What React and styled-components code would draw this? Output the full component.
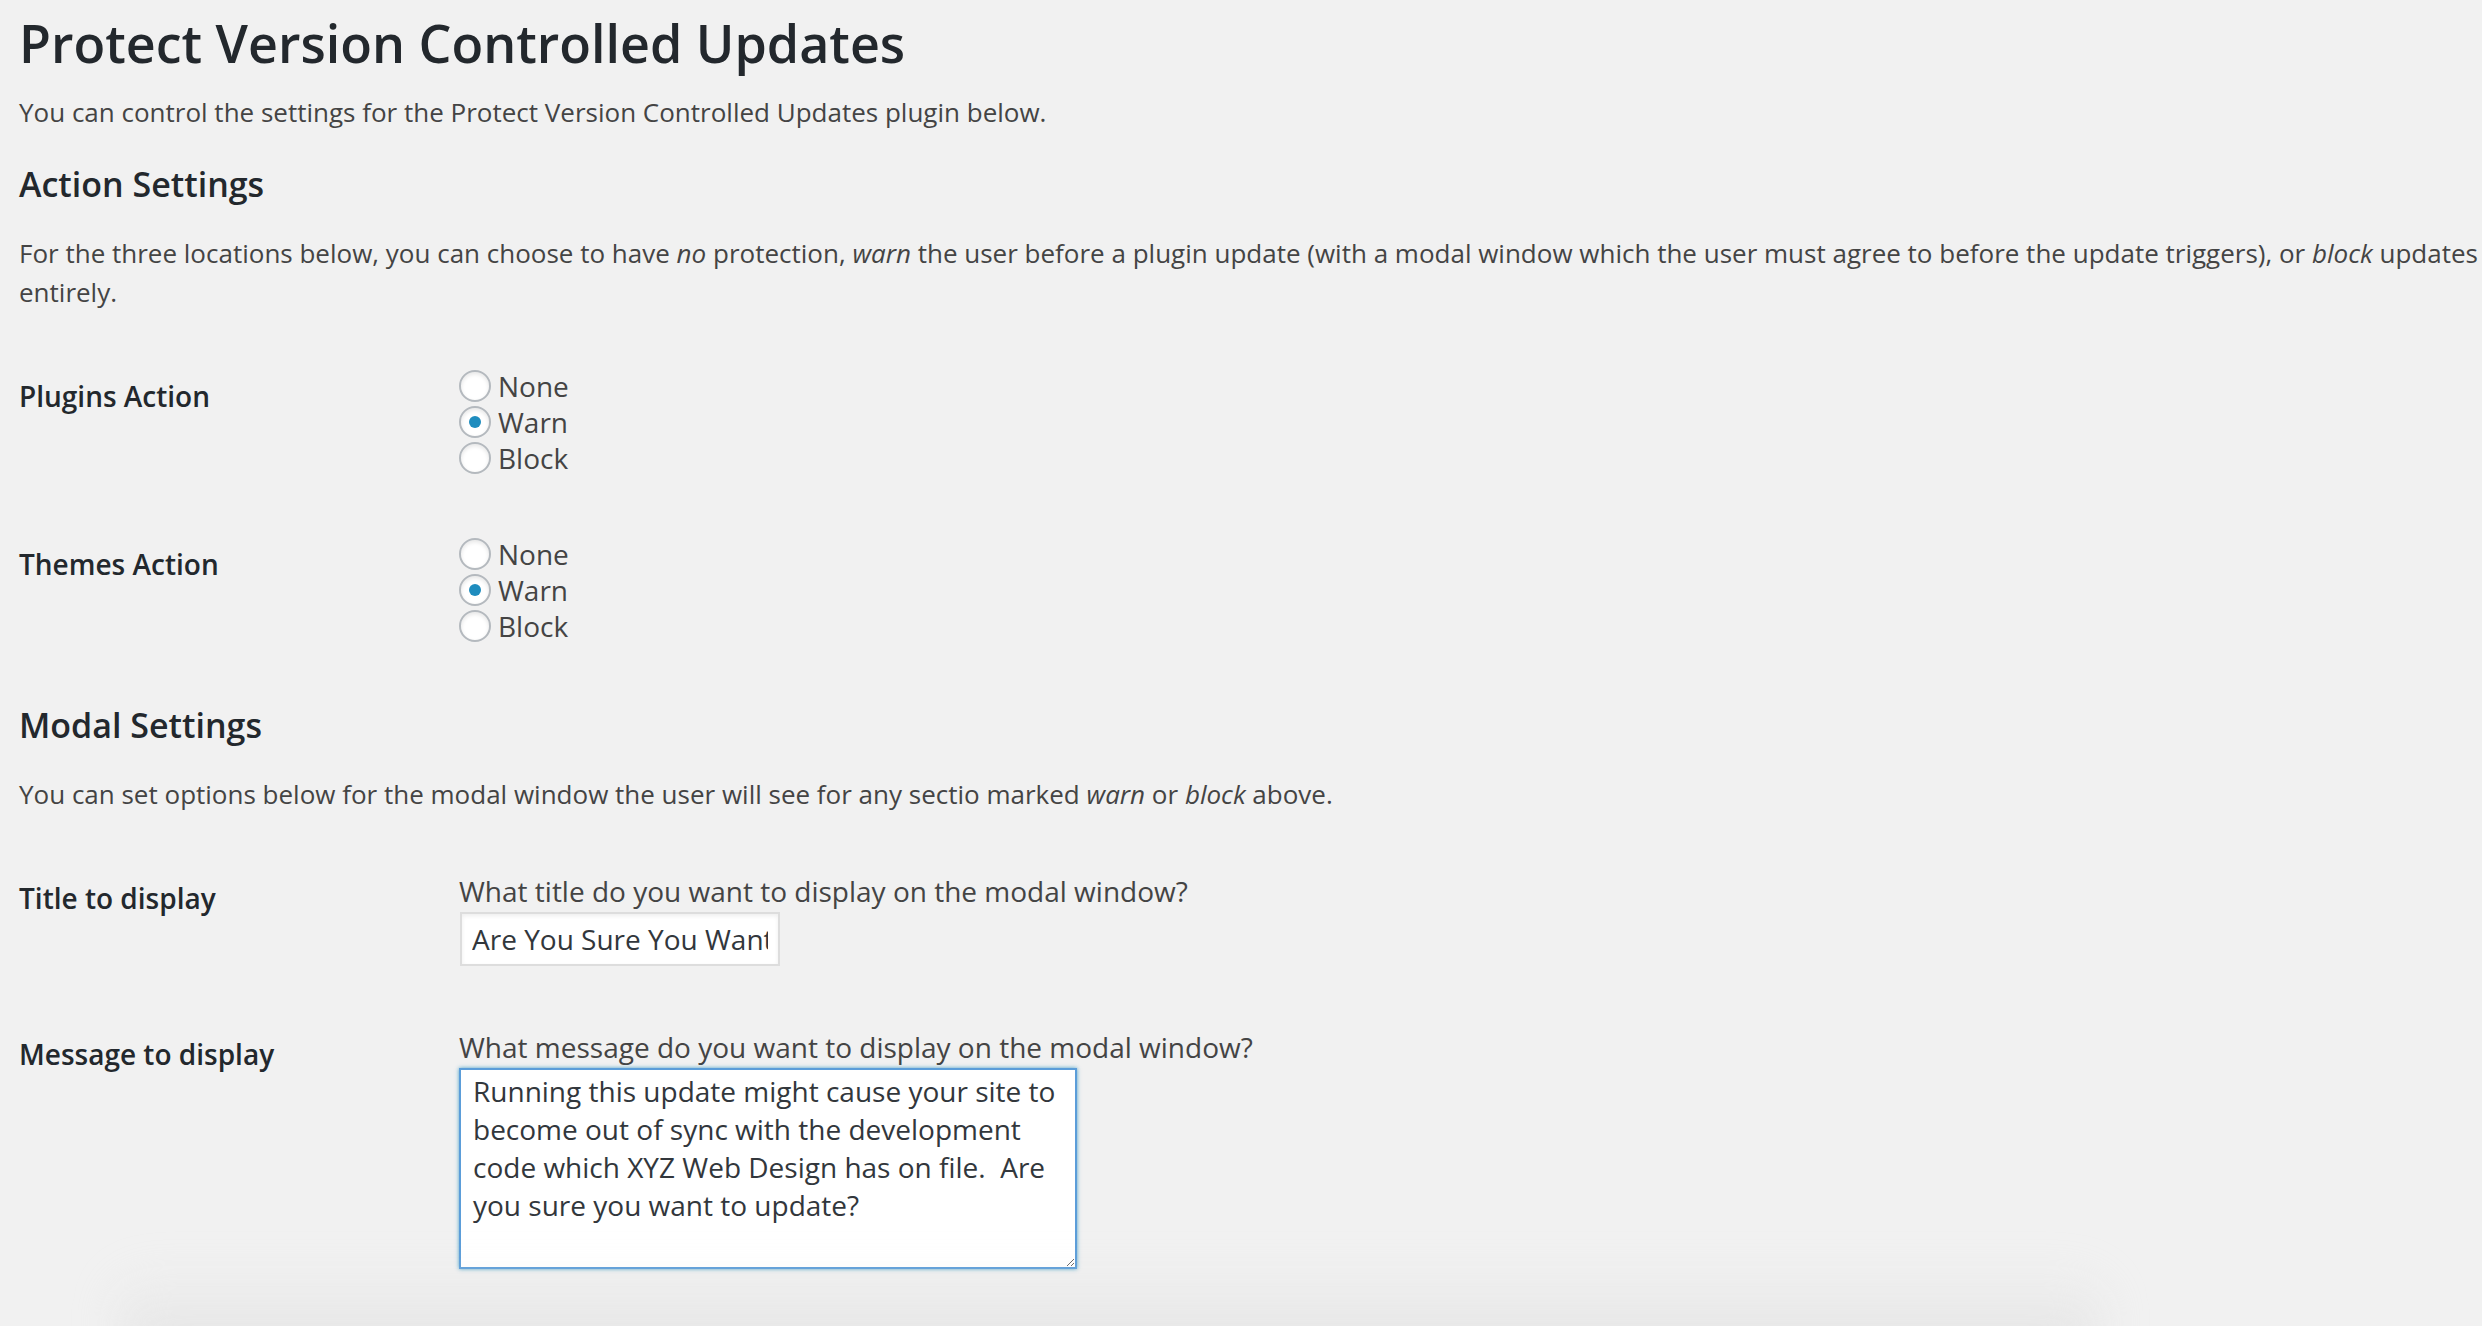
import React from "react";
import styled, { createGlobalStyle } from "styled-components";

const Global = createGlobalStyle`
  html, body { margin: 0; padding: 0; background: #f1f1f1; }
  body {
    font-family: "Open Sans", "Noto Sans", "Liberation Sans", sans-serif;
    color: #444;
    overflow: hidden;
  }
  * { box-sizing: border-box; }
`;

const Page = styled.div`
  padding: 9px 0 0 19px;
`;

const Title = styled.h1`
  margin: 0;
  font-size: 52px;
  line-height: 68px;
  font-weight: 600;
  color: #23282d;
`;

const Text = styled.p`
  margin: ${(p) => p.$mt}px 0 0;
  font-size: 26px;
  line-height: 39px;
  color: #444;
  em { font-style: italic; }
`;

const SectionHeading = styled.h2`
  margin: ${(p) => p.$mt}px 0 0;
  font-size: 34px;
  line-height: 44px;
  font-weight: 600;
  color: #23282d;
`;

const FormTable = styled.div`
  margin-top: 26px;
  display: flex;
  flex-direction: column;
`;

const Row = styled.div`
  display: flex;
  align-items: flex-start;
`;

const RowLabel = styled.div`
  flex: none;
  width: 440px;
  padding-top: 40px;
  font-size: 28px;
  line-height: 36.4px;
  font-weight: 600;
  color: #23282d;
`;

const Field = styled.div`
  padding: 30px 0;
  display: flex;
  flex-direction: column;
`;

const Option = styled.label`
  display: flex;
  align-items: center;
  gap: 7px;
  height: 36px;
  font-size: 28px;
  line-height: 36px;
  color: #444;
`;

const Radio = styled.input.attrs({ type: "radio" })`
  appearance: none;
  -webkit-appearance: none;
  margin: 0;
  flex: none;
  width: 32px;
  height: 32px;
  border: 2px solid #b4b9be;
  border-radius: 50%;
  background: #fff;
  box-shadow: inset 0 2px 4px rgba(0, 0, 0, 0.1);
  display: flex;
  align-items: center;
  justify-content: center;
  &:checked::before {
    content: "";
    width: 12px;
    height: 12px;
    border-radius: 50%;
    background: #1e8cbe;
  }
`;

const Description = styled.div`
  font-size: 28px;
  line-height: 42px;
  color: #444;
`;

const TextInput = styled.input`
  width: 320px;
  height: 54px;
  margin: 0 0 0 1px;
  padding: 0 10px;
  border: 2px solid #ddd;
  box-shadow: inset 0 2px 4px rgba(0, 0, 0, 0.07);
  background: #fff;
  color: #32373c;
  font-family: "Open Sans", "Noto Sans", sans-serif;
  font-size: 28px;
  outline: none;
`;

const TextArea = styled.textarea`
  display: block;
  width: 618px;
  height: 201px;
  margin: 0;
  padding: 2px 12px;
  border: 2px solid #5b9dd9;
  box-shadow: 0 0 4px rgba(30, 140, 190, 0.8);
  background: #fff;
  color: #32373c;
  font-family: "Open Sans", "Noto Sans", sans-serif;
  font-size: 28px;
  line-height: 38px;
  outline: none;
  resize: both;
`;

const BottomShade = styled.div`
  margin: -30px 380px 0 100px;
  height: 90px;
  background: linear-gradient(to bottom, rgba(225, 225, 225, 0), rgba(225, 225, 225, 0.9));
  filter: blur(22px);
  border-radius: 40px;
`;

const RadioGroup = ({ name, options, checked }) => (
  <Field>
    {options.map((o) => (
      <Option key={o}>
        <Radio name={name} defaultChecked={o === checked} />
        {o}
      </Option>
    ))}
  </Field>
);

const opts = ["None", "Warn", "Block"];

export default function App() {
  return (
    <>
      <Global />
      <Page>
        <Title>Protect Version Controlled Updates</Title>
        <Text $mt={16}>
          You can control the settings for the Protect Version Controlled Updates plugin below.
        </Text>
        <SectionHeading $mt={30}>Action Settings</SectionHeading>
        <Text $mt={28}>
          For the three locations below, you can choose to have <em>no</em> protection,{" "}
          <em>warn</em> the user before a plugin update (with a modal window which the user must
          agree to before the update triggers), or <em>block</em> updates entirely.
        </Text>
        <FormTable>
          <Row>
            <RowLabel>Plugins Action</RowLabel>
            <RadioGroup name="plugins" options={opts} checked="Warn" />
          </Row>
          <Row>
            <RowLabel>Themes Action</RowLabel>
            <RadioGroup name="themes" options={opts} checked="Warn" />
          </Row>
        </FormTable>
        <SectionHeading $mt={29}>Modal Settings</SectionHeading>
        <Text $mt={28}>
          You can set options below for the modal window the user will see for any sectio marked{" "}
          <em>warn</em> or <em>block</em> above.
        </Text>
        <FormTable>
          <Row>
            <RowLabel>Title to display</RowLabel>
            <Field>
              <Description>What title do you want to display on the modal window?</Description>
              <TextInput defaultValue="Are You Sure You Want To Update?" />
            </Field>
          </Row>
          <Row>
            <RowLabel>Message to display</RowLabel>
            <Field>
              <Description>What message do you want to display on the modal window?</Description>
              <TextArea defaultValue="Running this update might cause your site to become out of sync with the development code which XYZ Web Design has on file.  Are you sure you want to update?" />
            </Field>
          </Row>
        </FormTable>
        <BottomShade />
      </Page>
    </>
  );
}
